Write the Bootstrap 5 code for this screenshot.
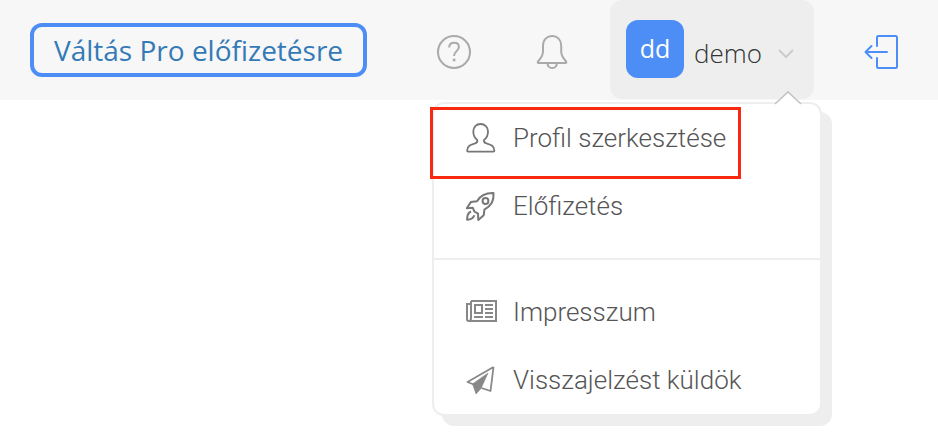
<!DOCTYPE html>
<html lang="hu">
<head>
<meta charset="utf-8">
<meta name="viewport" content="width=device-width, initial-scale=1">
<title>Fiók</title>
<link href="https://cdn.jsdelivr.net/npm/bootstrap@5.3.0/dist/css/bootstrap.min.css" rel="stylesheet">
<style>
body { font-family: "Open Sans", "Noto Sans", sans-serif; background: #fff; }
.topbar { height: 100px; padding: 0 39px 0 30px; background: #f7f7f7; }
.btn-upgrade { padding: 3px 20px; border: 4px solid #4c8df6; border-radius: 12px; color: #337ab7; font-size: 28px; line-height: 40px; white-space: nowrap; }
.btn-upgrade:hover { border-color: #337ab7; color: #23527c; }
.icon-group { gap: 62px; margin-right: 40px; color: #aaa; }
.icon-group .btn, .btn-logout { --bs-btn-border-width: 0; color: inherit; line-height: 1; margin-top: 4px; }
.btn-logout { color: #4c8df6; margin-left: 49px; }
.account-toggle { height: 99px; padding: 0 20px 1px 16px; gap: 10px; border: 0; border-radius: 12px; background: #eee; color: #333; font-size: 26px; }
.avatar { width: 58px; height: 58px; border-radius: 12px; background: #4c8df6; color: #fff; font-size: 25px; }
.account-name { font-weight: 300; padding-top: 8px; margin-right: 6px; }
.account-toggle svg { margin-top: 10px; }
.account-menu { top: 102px; right: -8px; width: 390px; padding: 0; border: 2px solid #eee; border-radius: 12px; box-shadow: 10px 10px 0 #eee; }
.menu-arrow { position: absolute; top: -13px; right: 18px; }
.account-menu .dropdown-item { height: 68px; padding: 0 30px; gap: 15px; color: #555; font: 300 26px/34px "Roboto", "Liberation Sans", sans-serif; }
.account-menu .dropdown-divider { margin: 18px 0; border-top: 2px solid #eee; opacity: 1; }
.highlight { position: absolute; top: 3px; left: -4px; width: 311px; height: 72px; border: 3px solid #f9290f; pointer-events: none; }
</style>
</head>
<body class="min-vh-100">
<header class="topbar d-flex align-items-center">
  <a href="#" class="btn btn-upgrade">Váltás Pro előfizetésre</a>
  <div class="icon-group d-flex align-items-center ms-auto">
    <button type="button" class="btn p-0" aria-label="Súgó">
      <svg width="36" height="36" viewBox="0 0 36 36" fill="none" stroke="currentColor" stroke-width="2"><circle cx="18" cy="18" r="16"/><path d="M13.200 13.400c0-3 2-4.600 4.900-4.600 2.800 0 4.800 1.700 4.800 4.200 0 4-4.900 4.400-4.900 9"/><path d="M16.800 26h2.600" stroke-width="2.600"/></svg>
    </button>
    <button type="button" class="btn p-0" aria-label="Értesítések">
      <svg width="36" height="36" viewBox="0 0 36 36" fill="none" stroke="currentColor" stroke-width="2" stroke-linejoin="round"><path d="M4.500 29h27c1-.1 1-.9.6-1.500-3-3.400-4.900-6.500-4.900-10v-6C27.200 5.800 23.400 2 18.200 2S9 5.800 9 11.500v6c0 3.500-2 6.600-5 10-.4.6-.4 1.400.5 1.500Z"/><path d="M13.500 29.500c.3 3 2.200 4.500 4.700 4.500s4.400-1.500 4.700-4.500"/></svg>
    </button>
  </div>
  <div class="dropdown align-self-start">
    <button type="button" class="account-toggle d-flex align-items-center" aria-expanded="true">
      <span class="avatar d-flex align-items-center justify-content-center">dd</span>
      <span class="account-name">demo</span>
      <svg width="16" height="10" viewBox="0 0 16 10" fill="none" stroke="#ccc" stroke-width="2"><path d="m1 1 7 7 7-7"/></svg>
    </button>
    <div class="account-menu dropdown-menu show">
      <svg class="menu-arrow" width="28" height="14" viewBox="0 0 28 14"><path d="M0 14 14 1l14 13Z" fill="#fff"/><path d="M1 13 14 1l13 12" fill="none" stroke="#bfbfbf" stroke-width="1.300"/></svg>
      <a href="#" class="dropdown-item d-flex align-items-center">
        <svg width="34" height="34" viewBox="0 0 34 34" fill="none" stroke="#777" stroke-width="1.800" stroke-linejoin="round"><path d="M16.500 3c-4.300 0-7.200 3.100-7.200 7.500 0 3.600 1.400 6.500 4 8.400.5 2.200-.5 3-2.500 3.600-4.300 1.300-7.400 2.100-7.700 7.100 0 .6.300 1 1 1h25.300c.7 0 1-.4 1-1-.3-5-3.400-5.800-7.700-7.100-2-.6-3.200-1.400-2.700-3.600 2.600-1.900 4-4.800 4-8.400C24 6.100 20.900 3 16.500 3Z"/></svg>
        Profil szerkesztése
      </a>
      <span class="highlight"></span>
      <a href="#" class="dropdown-item d-flex align-items-center">
        <svg width="34" height="34" viewBox="0 0 34 34" fill="none" stroke="#777" stroke-width="2" stroke-linejoin="round"><path d="M29.500 4c-8-.2-13 2-16.500 8.200l-6 .7-4.200 6.300 6-.4 1.600 3.700 3.600 2.200.3 6.300 5.400-4.700.7-5.600C27.500 16.500 30 12 29.500 4Z"/><circle cx="21.500" cy="12" r="2.900"/><path d="M7 22.500c-3 1.300-4 4.200-3.900 8.300 4.100-.1 6.200-1.300 7.200-4.500"/></svg>
        Előfizetés
      </a>
      <hr class="dropdown-divider">
      <a href="#" class="dropdown-item d-flex align-items-center">
        <svg width="34" height="34" viewBox="0 0 34 34" fill="none" stroke="#888" stroke-width="2"><path d="M7 6h25v20H4.500C3 26 3 25 3 24V9h4M7 6v17c0 2-.5 3-2 3"/><path d="M11 10h7v8h-7zM21 10h8M21 14h8M21 18h8M10 22h9M21 22h8"/></svg>
        Impresszum
      </a>
      <a href="#" class="dropdown-item d-flex align-items-center">
        <svg width="34" height="34" viewBox="0 0 34 34" fill="none" stroke="#888" stroke-width="1.800" stroke-linejoin="round"><path d="M29.500 4 3.500 19l7.500 3M29.500 4 26.500 28l-9-3"/><path d="M24 10 8.500 21l3.500 10 5-5.500Z" fill="#888" stroke-width=".6"/></svg>
        Visszajelzést küldök
      </a>
    </div>
  </div>
  <button type="button" class="btn btn-logout p-0" aria-label="Kijelentkezés">
    <svg width="36" height="36" viewBox="0 0 36 36" fill="none" stroke="currentColor" stroke-width="2" stroke-linecap="round" stroke-linejoin="round"><path d="M14 12V3.500c0-1 .5-1.500 1.500-1.500h17c1 0 1.500.5 1.500 1.500v29c0 1-.5 1.500-1.500 1.500h-17c-1 0-1.500-.5-1.500-1.500V24M24 18H2.500M8.500 12l-6 6 6 6"/></svg>
  </button>
</header>
<script src="https://cdn.jsdelivr.net/npm/bootstrap@5.3.0/dist/js/bootstrap.bundle.min.js"></script>
</body>
</html>
